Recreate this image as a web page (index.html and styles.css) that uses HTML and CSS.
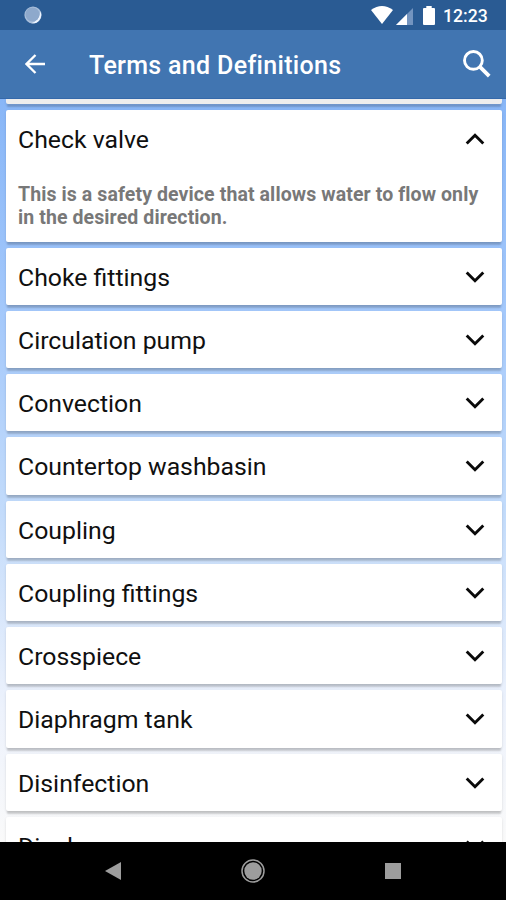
FILE: index.html
```html
<!DOCTYPE html>
<html lang="en">
<head>
<meta charset="utf-8">
<title>Terms and Definitions</title>
<link rel="stylesheet" href="styles.css">
</head>
<body>
<svg class="defs" width="0" height="0" aria-hidden="true">
  <symbol id="chevron" viewBox="0 0 20 12"><path d="M1.7 1.5 10 9.7l8.3-8.2" fill="none" stroke="#0a0a0a" stroke-width="2.9"/></symbol>
</svg>
<div class="screen">
  <header class="status">
    <svg class="status-dot" viewBox="0 0 18 18"><circle cx="9" cy="9" r="8.6" fill="#a9bfdb"/><path d="M16.5 5.5A8.6 8.6 0 0 1 7 17.2Q15 15.5 16.5 5.5z" fill="#eef5ff"/><circle cx="8.5" cy="8.5" r="7" fill="#8ea9cc"/></svg>
    <div class="status-right">
      <svg class="wifi" viewBox="0 0 22 18"><path d="M0 4Q11-4 22 4L11 18z" fill="#fff"/></svg>
      <svg class="signal" viewBox="0 0 17 17"><path d="M17 0V17H0z" fill="#7394bf"/><path d="M11 6V17H0z" fill="#fff"/></svg>
      <svg class="battery" viewBox="0 0 12 19"><path d="M3.3 0h5.4v2H11q1 0 1 1v15q0 1-1 1H1q-1 0-1-1V3q0-1 1-1h2.3z" fill="#fff"/></svg>
      <span class="clock">12:23</span>
    </div>
  </header>
  <nav class="appbar">
    <svg class="back" viewBox="0 0 20 20"><path d="M20 10H2M10.5 1 1.5 10l9 9" fill="none" stroke="#fff" stroke-width="2.3"/></svg>
    <h1>Terms and Definitions</h1>
    <svg class="search" viewBox="0 0 28 28"><circle cx="10.4" cy="10.4" r="8.9" fill="none" stroke="#fff" stroke-width="2.9"/><path d="M16.7 16.7 26.2 26.2" stroke="#fff" stroke-width="3.8"/></svg>
  </nav>
  <main class="list">
    <article class="card previous"></article>
    <article class="card open">
      <div class="row"><h2>Check valve</h2><svg class="chevron up"><use href="#chevron"/></svg></div>
      <p>This is a safety device that allows water to flow only in the desired direction.</p>
    </article>
    <article class="card row"><h2>Choke fittings</h2><svg class="chevron"><use href="#chevron"/></svg></article>
    <article class="card row"><h2>Circulation pump</h2><svg class="chevron"><use href="#chevron"/></svg></article>
    <article class="card row"><h2>Convection</h2><svg class="chevron"><use href="#chevron"/></svg></article>
    <article class="card row"><h2>Countertop washbasin</h2><svg class="chevron"><use href="#chevron"/></svg></article>
    <article class="card row"><h2>Coupling</h2><svg class="chevron"><use href="#chevron"/></svg></article>
    <article class="card row"><h2>Coupling fittings</h2><svg class="chevron"><use href="#chevron"/></svg></article>
    <article class="card row"><h2>Crosspiece</h2><svg class="chevron"><use href="#chevron"/></svg></article>
    <article class="card row"><h2>Diaphragm tank</h2><svg class="chevron"><use href="#chevron"/></svg></article>
    <article class="card row"><h2>Disinfection</h2><svg class="chevron"><use href="#chevron"/></svg></article>
    <article class="card row"><h2>Display</h2><svg class="chevron"><use href="#chevron"/></svg></article>
  </main>
  <footer class="navbar">
    <svg class="nav-back" viewBox="0 0 16 18"><path d="M0 9 16 0V18z" fill="#9d9d9d"/></svg>
    <svg class="nav-home" viewBox="0 0 24 24"><circle cx="12" cy="12" r="11" fill="none" stroke="#9d9d9d" stroke-width="1.5"/><circle cx="12" cy="12" r="8.7" fill="#9d9d9d"/></svg>
    <svg class="nav-recent" viewBox="0 0 16 16"><path d="M0 0H16V16H0z" fill="#9d9d9d"/></svg>
  </footer>
</div>
</body>
</html>
```
FILE: styles.css
```css
* { box-sizing: border-box; }
body { margin: 0; font-family: Roboto, "Liberation Sans", sans-serif; }
svg { display: block; flex: none; }
.defs { position: absolute; }
.screen { width: 506px; height: 900px; display: flex; flex-direction: column; overflow: hidden; }

.status { flex: none; height: 30px; padding: 0 18px 0 24px; background: #2a5b93; display: flex; align-items: center; justify-content: space-between; }
.status-dot { width: 18px; height: 18px; }
.status-right { display: flex; align-items: center; }
.wifi { width: 22px; height: 18px; }
.signal { width: 17px; height: 17px; margin: 2px 10px 0 3px; }
.battery { width: 12px; height: 19px; margin-right: 8px; }
.clock { color: #fff; font-size: 17.6px; font-weight: 500; line-height: 22px; padding-top: 1px; width: 45px; white-space: nowrap; }

.appbar { flex: none; height: 69px; padding: 0 15px 0 25px; background: #4175b1; border-bottom: 1px solid #3569aa; display: flex; align-items: center; color: #fff; }
.back { width: 20px; height: 20px; }
.appbar h1 { flex: 1; margin: 4px 0 0 44px; font-size: 25px; line-height: 32px; font-weight: 500; letter-spacing: .32px; white-space: nowrap; }
.search { width: 28px; height: 28px; }

.list { flex: 1; min-height: 0; overflow: hidden; padding: 0 4px 0 6px; background: linear-gradient(#88b6f7, #a0c6fb 25%, #c2dbfb 55%, #edf2fc 82%, #fafafa); display: flex; flex-direction: column; gap: 6px; }
.card { flex: none; height: 57.25px; background: #fff; border-radius: 2px; box-shadow: 0 4px 2px -1px rgba(0, 0, 0, .17), 0 1px 3px rgba(0, 0, 0, .1); color: #101010; }
.card.previous { height: 5px; background: #ededed; border-radius: 0 0 2px 2px; }
.card.open { height: 131.5px; }
.row { height: 57.25px; padding: 0 17px 0 12px; display: flex; align-items: center; justify-content: space-between; }
.card h2 { margin: 3px 0 0; font-size: 24.8px; line-height: 32px; font-weight: 400; white-space: nowrap; }
.chevron { width: 20px; height: 12px; margin-top: 1px; }
.chevron.up { transform: rotate(180deg); }
.card p { margin: 16px 20px 0 12px; font-size: 19.5px; line-height: 23px; font-weight: 700; letter-spacing: .1px; color: #787878; }

.navbar { flex: none; height: 58px; padding: 0 105px; background: #000; display: flex; align-items: center; justify-content: space-between; }
.nav-back { width: 16px; height: 18px; }
.nav-home { width: 24px; height: 24px; }
.nav-recent { width: 16px; height: 16px; }
```
